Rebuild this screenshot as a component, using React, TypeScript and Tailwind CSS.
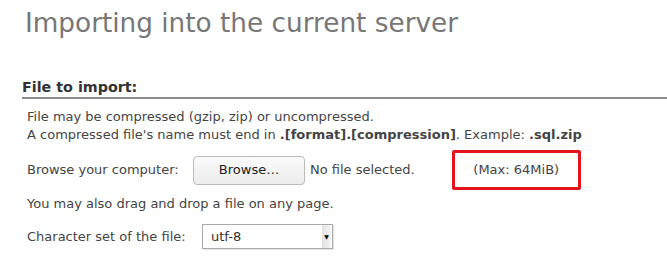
export default function App() {
  return (
    <div className="min-h-[278px] bg-white text-[#444] font-['DejaVu_Sans',sans-serif] text-[13px]">
      <h2 className="pl-[25px] pt-[5px] text-[26.3px] leading-[36px] text-[#777]">
        Importing into the current server
      </h2>

      <div className="mt-[37px] pl-[22px]">
        <div className="border-b-2 border-[#8a8a8a] pb-[1px] text-[14.3px] font-bold leading-[18px] text-[#333]">
          File to import:
        </div>

        <div className="pl-[5px] pt-[9px]">
          <p className="leading-[18px]">File may be compressed (gzip, zip) or uncompressed.</p>
          <p className="leading-[18px]">
            A compressed file's name must end in <b>.[format].[compression]</b>. Example: <b>.sql.zip</b>
          </p>

          <div className="mt-[6px] flex h-[40px] items-center">
            <span className="w-[166px]">Browse your computer:</span>
            <button className="h-[29px] w-[112px] rounded-[4px] border border-[#bbb] bg-gradient-to-b from-[#fbfbfb] to-[#ececec] text-[#222]">
              Browse…
            </button>
            <span className="ml-[5px]">No file selected.</span>
            <div className="ml-[37px] flex h-[40px] w-[129px] items-center justify-center rounded-[2px] border-[3px] border-[#e5141c]">
              (Max: 64MiB)
            </div>
          </div>

          <p className="mt-[5px] leading-[18px]">You may also drag and drop a file on any page.</p>

          <div className="mt-[11px] flex items-center">
            <label className="w-[175px]">Character set of the file:</label>
            <div className="flex h-[25px] w-[131px] items-center justify-between border border-[#aaa] bg-white pl-[8px] text-[#333] shadow-[1px_1px_1px_rgba(0,0,0,0.1)]">
              <span>utf-8</span>
              <span className="mr-[1px] flex h-[23px] w-[9px] items-center justify-center bg-gradient-to-r from-[#e2e2e2] to-[#f4f4f4] text-[6px] text-black">▼</span>
            </div>
          </div>
        </div>
      </div>
    </div>
  );
}
